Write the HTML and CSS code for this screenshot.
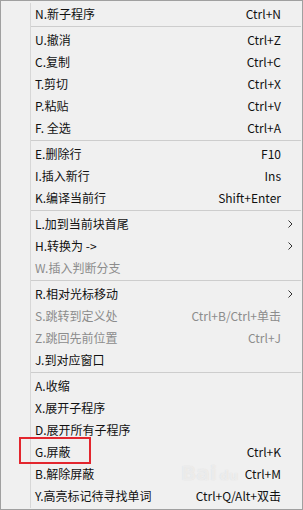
FILE: index.html
```html
<!DOCTYPE html>
<html lang="zh">
<head>
<meta charset="utf-8">
<link rel="stylesheet" href="styles.css">
</head>
<body>
<div class="menu">
  <div class="items">
    <div class="item"><span class="label">N.新子程序</span><span class="key">Ctrl+N</span><span class="sub"></span></div>
    <div class="sep"></div>
    <div class="item"><span class="label">U.撤消</span><span class="key">Ctrl+Z</span><span class="sub"></span></div>
    <div class="item"><span class="label">C.复制</span><span class="key">Ctrl+C</span><span class="sub"></span></div>
    <div class="item"><span class="label">T.剪切</span><span class="key">Ctrl+X</span><span class="sub"></span></div>
    <div class="item"><span class="label">P.粘贴</span><span class="key">Ctrl+V</span><span class="sub"></span></div>
    <div class="item"><span class="label">F. 全选</span><span class="key">Ctrl+A</span><span class="sub"></span></div>
    <div class="sep"></div>
    <div class="item"><span class="label">E.删除行</span><span class="key">F10</span><span class="sub"></span></div>
    <div class="item"><span class="label">I.插入新行</span><span class="key">Ins</span><span class="sub"></span></div>
    <div class="item"><span class="label">K.编译当前行</span><span class="key">Shift+Enter</span><span class="sub"></span></div>
    <div class="sep"></div>
    <div class="item"><span class="label">L.加到当前块首尾</span><span class="key"></span><span class="sub"><svg width="5" height="8" viewBox="0 0 5 8"><path d="M0.5 0.5 L4 4 L0.5 7.5" fill="none" stroke="#333" stroke-width="1"/></svg></span></div>
    <div class="item"><span class="label">H.转换为 -&gt;</span><span class="key"></span><span class="sub"><svg width="5" height="8" viewBox="0 0 5 8"><path d="M0.5 0.5 L4 4 L0.5 7.5" fill="none" stroke="#333" stroke-width="1"/></svg></span></div>
    <div class="item disabled"><span class="label">W.插入判断分支</span><span class="key"></span><span class="sub"></span></div>
    <div class="sep"></div>
    <div class="item"><span class="label">R.相对光标移动</span><span class="key"></span><span class="sub"><svg width="5" height="8" viewBox="0 0 5 8"><path d="M0.5 0.5 L4 4 L0.5 7.5" fill="none" stroke="#333" stroke-width="1"/></svg></span></div>
    <div class="item disabled"><span class="label">S.跳转到定义处</span><span class="key">Ctrl+B/Ctrl+单击</span><span class="sub"></span></div>
    <div class="item disabled"><span class="label">Z.跳回先前位置</span><span class="key">Ctrl+J</span><span class="sub"></span></div>
    <div class="item"><span class="label">J.到对应窗口</span><span class="key"></span><span class="sub"></span></div>
    <div class="sep"></div>
    <div class="item"><span class="label">A.收缩</span><span class="key"></span><span class="sub"></span></div>
    <div class="item"><span class="label">X.展开子程序</span><span class="key"></span><span class="sub"></span></div>
    <div class="item"><span class="label">D.展开所有子程序</span><span class="key"></span><span class="sub"></span></div>
    <div class="item"><span class="label">G.屏蔽</span><span class="key">Ctrl+K</span><span class="sub"></span></div>
    <div class="item"><span class="label">B.解除屏蔽</span><span class="key">Ctrl+M</span><span class="sub"></span></div>
    <div class="item"><span class="label">Y.高亮标记待寻找单词</span><span class="key">Ctrl+Q/Alt+双击</span><span class="sub"></span></div>
  </div>
  <div class="highlight"></div>
  <div class="watermark">Bai<span class="du">du</span></div>
</div>
</body>
</html>
```

FILE: styles.css
```css
html, body {
  margin: 0;
  padding: 0;
  background: #f0f0f0;
}

.menu {
  position: relative;
  box-sizing: border-box;
  width: 303px;
  height: 510px;
  background: #f0f0f0;
  border: 1px solid #a0a0a0;
  padding: 2px 0 1px 29px;
  font-family: "Noto Sans CJK SC", "Microsoft YaHei", sans-serif;
  font-size: 12px;
  color: #111;
}

.items {
  display: flex;
  flex-direction: column;
  height: 100%;
  border-left: 1px solid #d7d7d7;
}

.item {
  display: grid;
  grid-template-columns: 1fr auto 21px;
  align-items: center;
  height: 22px;
  padding-left: 4px;
  line-height: 22px;
  white-space: nowrap;
}

.item.disabled {
  color: #8c8c8c;
}

.key {
  text-align: right;
}

.sub {
  display: flex;
  align-items: center;
  padding-left: 7px;
}

.sub svg {
  display: block;
}

.sep {
  height: 4px;
  box-sizing: border-box;
  padding-top: 1px;
  margin-right: 1px;
}

.sep::before {
  content: "";
  display: block;
  height: 1px;
  background: #cdcdcd;
}

.highlight {
  position: absolute;
  left: 18px;
  top: 436px;
  width: 68px;
  height: 23px;
  border: 2px solid #e3262e;
}

.watermark {
  position: absolute;
  left: 180px;
  top: 460px;
  font-family: "DejaVu Sans", sans-serif;
  font-size: 20px;
  font-weight: bold;
  color: rgba(255, 255, 255, 0.55);
  text-shadow: 0 0 1px rgba(160, 160, 160, 0.35);
  pointer-events: none;
}

.watermark .du {
  font-size: 13px;
  margin-left: 3px;
}
```
